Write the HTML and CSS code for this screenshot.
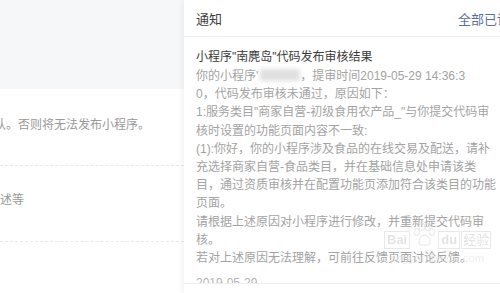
FILE: index.html
```html
<!DOCTYPE html>
<html lang="zh-CN">
<head>
<meta charset="utf-8">
<link rel="stylesheet" href="styles.css">
</head>
<body>
<div class="page">
  <div class="main">
    <div class="main-top"></div>
    <div class="row row-a"><span class="row-text shift">认。否则将无法发布小程序。</span></div>
    <div class="row row-b"><span class="row-text">述等</span></div>
    <div class="row row-c"></div>
  </div>
  <div class="panel">
    <div class="panel-head">
      <span class="panel-title">通知</span>
      <span class="read-all">全部已读</span>
    </div>
    <div class="panel-body">
      <div class="msg-title">小程序"南麂岛"代码发布审核结果</div>
      <div class="msg-text">
        <div class="ln">你的小程序'<span class="blur"></span>，提审时间2019-05-29 14:36:3</div>
        <div class="ln">0，代码发布审核未通过，原因如下：</div>
        <div class="ln">1:服务类目"商家自营-初级食用农产品_"与你提交代码审</div>
        <div class="ln">核时设置的功能页面内容不一致:</div>
        <div class="ln">(1):你好，你的小程序涉及食品的在线交易及配送，请补</div>
        <div class="ln">充选择商家自营-食品类目，并在基础信息处申请该类</div>
        <div class="ln">目，通过资质审核并在配置功能页添加符合该类目的功能</div>
        <div class="ln">页面。</div>
        <div class="ln">请根据上述原因对小程序进行修改，并重新提交代码审</div>
        <div class="ln">核。</div>
        <div class="ln">若对上述原因无法理解，可前往反馈页面讨论反馈。</div>
      </div>
      <div class="msg-date">2019-05-29</div>
      <div class="watermark">
        <div class="wm-row">
          <span class="wm-box">Bai</span>
          <svg class="wm-paw" width="26" height="24" viewBox="0 0 26 24" fill="none" stroke="#e2e2e2" stroke-width="1.4">
            <ellipse cx="6" cy="9" rx="2.6" ry="3.4"/>
            <ellipse cx="11" cy="4" rx="2.6" ry="3.4"/>
            <ellipse cx="16.5" cy="4" rx="2.6" ry="3.4"/>
            <ellipse cx="21" cy="9" rx="2.6" ry="3.4"/>
            <path d="M8 20 C8 14 11 12 13.5 12 C16 12 19 14 19 20 C19 23 8 23 8 20 Z"/>
          </svg>
          <span class="wm-box">du</span><span class="wm-jy">经验</span>
        </div>
        <div class="wm-url">jingyan.baidu.com</div>
      </div>
    </div>
    <div class="panel-foot"></div>
  </div>
</div>
</body>
</html>
```

FILE: styles.css
```css
html, body {
  margin: 0;
  padding: 0;
  background: #ffffff;
}
body {
  width: 500px;
  height: 293px;
  overflow: hidden;
  font-family: "Liberation Sans", "Noto Sans CJK SC", sans-serif;
}
.page {
  display: flex;
  width: 500px;
  height: 293px;
}
.main {
  width: 184px;
  flex: none;
  overflow: hidden;
  background: #ffffff;
}
.main-top {
  height: 89px;
  background: #f6f7f9;
}
.row {
  border-bottom: 1px dashed #e8e8e8;
  white-space: nowrap;
  font-size: 12px;
  line-height: 20px;
  color: #999999;
}
.row-a {
  padding: 26px 0 30px;
}
.row-b {
  padding: 24px 0 31px;
}
.row-c {
  border-bottom: none;
  height: 51px;
}
.row-text {
  display: block;
}
.shift {
  margin-left: -6px;
}
.panel {
  flex: 1;
  position: relative;
  display: flex;
  flex-direction: column;
  background: #ffffff;
  box-shadow: -2px 0 6px rgba(0, 0, 0, 0.05);
  overflow: hidden;
}
.panel-head {
  height: 36px;
  flex: none;
  display: flex;
  align-items: center;
  padding-left: 12px;
  border-bottom: 1px solid #efeff2;
  font-size: 13px;
  white-space: nowrap;
}
.panel-title {
  color: #3e3e3e;
}
.read-all {
  margin-left: auto;
  margin-right: -10px;
  color: #5b6f9a;
}
.panel-body {
  flex: 1;
  overflow: hidden;
  padding: 10px 12px 0;
  position: relative;
}
.msg-title {
  font-size: 12px;
  line-height: 20px;
  color: #3a3a3a;
  white-space: nowrap;
}
.msg-text {
  font-size: 12px;
  line-height: 18.2px;
  color: #a3a3a3;
  white-space: nowrap;
}
.blur {
  display: inline-block;
  width: 40px;
  height: 12px;
  margin-left: 2px;
  vertical-align: -1px;
  background: #e0e0e0;
  filter: blur(2px);
}
.msg-date {
  margin-top: 7px;
  font-size: 12px;
  line-height: 18px;
  color: #b4b4b4;
}
.watermark {
  position: absolute;
  left: 200px;
  top: 186px;
  display: flex;
  flex-direction: column;
  align-items: center;
  opacity: 0.6;
}
.wm-row {
  display: flex;
  align-items: flex-end;
  gap: 1px;
}
.wm-box {
  font-size: 13px;
  line-height: 14px;
  padding: 1px 2px;
  border: 1px solid #dadada;
  color: #d2d2d2;
  font-weight: bold;
}
.wm-jy {
  font-size: 13px;
  line-height: 16px;
  color: #d2d2d2;
  border: 1px solid #dadada;
  padding: 0 1px;
}
.wm-paw {
  margin-bottom: 2px;
}
.wm-url {
  margin-top: 3px;
  font-size: 11px;
  line-height: 12px;
  color: #e2e2e2;
  letter-spacing: 0.3px;
}
.panel-foot {
  height: 9px;
  flex: none;
  border-top: 1px solid #efeff2;
  background: #ffffff;
}
```
